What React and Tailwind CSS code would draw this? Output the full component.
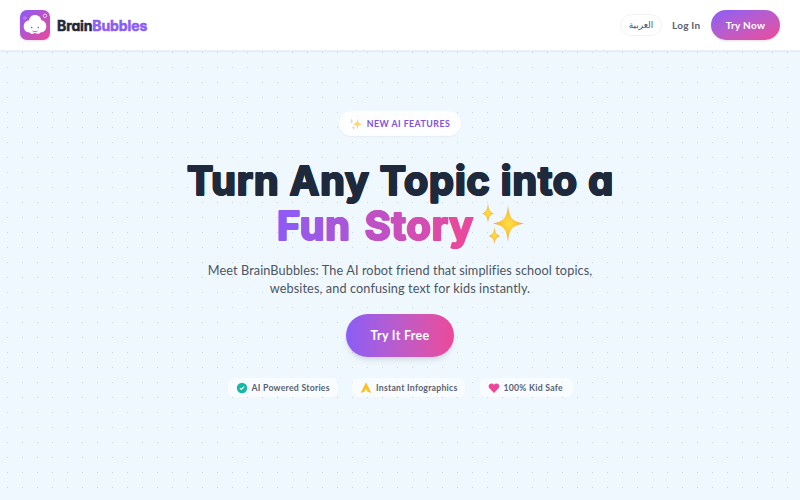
import React from 'react';

const Sparkles = ({ className }) => (
  <svg viewBox="0 0 42 42" className={className} aria-hidden="true">
    <defs>
      <radialGradient id="sparkle">
        <stop offset="0" stopColor="#fde047" />
        <stop offset="0.5" stopColor="#fbc638" />
        <stop offset="1" stopColor="#f2a06c" />
      </radialGradient>
    </defs>
    <path fill="url(#sparkle)" d="M26 3C27.300 16 30 19 42 21.500C30 24 27.300 27 26 40C24.700 27 22 24 11 21.500C22 19 24.700 16 26 3Z" />
    <path fill="url(#sparkle)" d="M6 1C6.900 8 8 10 12 11.500C8 13 6.900 15 6 21C5.100 15 4 13 0 11.500C4 10 5.100 8 6 1Z" />
    <path fill="url(#sparkle)" d="M12.500 25C13.300 31 14.500 32.500 18.500 34C14.500 35.500 13.300 37 12.500 42C11.700 37 10.500 35.500 6.500 34C10.500 32.500 11.700 31 12.500 25Z" />
  </svg>
);

const Logo = () => (
  <svg viewBox="0 0 30 30" className="h-[30px] w-[30px] shrink-0 rounded-[7px] shadow-sm" aria-hidden="true">
    <defs>
      <linearGradient id="logo" x1="0" y1="0" x2="1" y2="1">
        <stop stopColor="#8b5cf6" />
        <stop offset="1" stopColor="#ec4899" />
      </linearGradient>
    </defs>
    <rect width="30" height="30" fill="url(#logo)" />
    <path fill="#fff" d="M9 10.500C9.500 7 12 4.800 15.200 5C18.500 5 21 7.300 21.300 10.200C24.300 10.500 26.300 13 26.300 16C26.300 20 24 22.300 20.800 22.300C19.500 24 17 24.300 15 23C13 24.300 10.500 24 9.200 22.300C6 22.300 3.700 20 3.700 16.500C3.700 13 6 10.500 9 10.500Z" />
    <circle cx="11.700" cy="17.500" r="0.800" fill="#a04bc0" />
    <circle cx="18.300" cy="17.500" r="0.800" fill="#a04bc0" />
    <path d="M12.500 21Q13.700 22.600 15 21.400Q16.300 22.600 17.500 21" fill="none" stroke="#c04bb0" strokeWidth="0.900" />
    <circle cx="4.800" cy="8" r="1.200" fill="none" stroke="#c9a5f5" strokeWidth="0.700" />
    <circle cx="25" cy="5.800" r="1.700" fill="none" stroke="#f3d5f3" strokeWidth="0.900" />
  </svg>
);

const CheckIcon = () => (
  <svg viewBox="0 0 12 12" className="h-3 w-3" aria-hidden="true">
    <circle cx="6" cy="6" r="5.200" fill="#14b8a6" />
    <path d="M3.900 6.100L5.400 7.500L8.100 4.700" fill="none" stroke="#fff" strokeWidth="1.200" />
  </svg>
);

const BoltIcon = () => (
  <svg viewBox="0 0 12 12" className="h-3 w-3" aria-hidden="true">
    <path d="M6 1.600L10.300 10.200L7.300 8.700V6.500H4.700V8.700L1.700 10.200Z" fill="#fbbf24" stroke="#fbbf24" strokeWidth="1.200" strokeLinejoin="round" />
  </svg>
);

const HeartIcon = () => (
  <svg viewBox="0 0 12 12" className="h-3 w-3" aria-hidden="true">
    <path d="M6 11L1.600 6.500C-.6 3.800 1.300 1.400 3.500 1.400Q5.100 1.400 6 2.700Q6.900 1.400 8.500 1.400C10.700 1.400 12.600 3.800 10.400 6.500Z" fill="#ec4899" />
  </svg>
);

const features = [
  { label: 'AI Powered Stories', icon: CheckIcon, width: 'w-[110px]', text: 'w-[78px]' },
  { label: 'Instant Infographics', icon: BoltIcon, width: 'w-[113px]', text: 'w-[81px]' },
  { label: '100% Kid Safe', icon: HeartIcon, width: 'w-[93px]', text: 'w-[61px]' },
];

function App() {
  return (
    <div className="flex h-[500px] w-[800px] flex-col overflow-hidden bg-[#f0f8ff] bg-[radial-gradient(#cbd5e5_0.7px,transparent_1px)] bg-[size:15px_15px] font-['Lato','Noto_Sans',sans-serif] text-[#4b5563]">
      <header className="flex h-[51px] shrink-0 items-center justify-between border-b border-[#e8eef6] bg-white/95 px-5 shadow-xs">
        <div className="flex items-center gap-[7px]">
          <Logo />
          <div className="whitespace-nowrap font-['Inter',sans-serif] text-[14px] font-bold tracking-[-0.12px] text-[#1e293b] [-webkit-text-stroke:0.5px_currentColor] [font-feature-settings:'cv11']">
            Brain<span className="text-[#8b5cf6]">Bubbles</span>
          </div>
        </div>
        <nav className="flex items-center gap-[10px]">
          <button className="h-[22px] w-[42px] rounded-full border border-[#f1f3f7] bg-white font-['DejaVu_Sans',sans-serif] text-[9px] leading-none">العربية</button>
          <a className="w-[29px] whitespace-nowrap text-[10px] font-bold tracking-[0.25px] text-[#596270]" href="#login">Log In</a>
          <button className="h-[30px] w-[69px] rounded-full bg-linear-to-br from-[#8b5cf6] to-[#ec4899] text-[10px] font-bold tracking-[0.3px] text-white shadow-sm">Try Now</button>
        </nav>
      </header>

      <main className="flex flex-col items-center pt-[60px]">
        <div className="flex h-[25px] w-[122px] items-center justify-center gap-[5px] rounded-full bg-white/80 shadow-xs">
          <Sparkles className="h-3 w-3 opacity-80" />
          <span className="whitespace-nowrap text-[8.8px] font-bold tracking-[0.45px] text-[#8650d8]">NEW AI FEATURES</span>
        </div>

        <h1 className="mt-[23px] flex flex-col items-center whitespace-nowrap font-['Inter',sans-serif] text-[39.5px] leading-[45px] font-bold tracking-[0.9px] text-[#1e293b] [font-feature-settings:'cv11'] [-webkit-text-stroke:1.8px_currentColor] [text-shadow:1px_0_currentColor,0_1px_currentColor,-1px_0_currentColor,0_-1px_currentColor]">
          <span className="flex w-[426px] justify-between">
            <span>Turn</span><span>Any</span><span>Topic</span><span>into</span><span className="-mr-px">a</span>
          </span>
          <span className="flex w-[248px] items-start justify-between">
            <span className="flex w-[198px] justify-between pl-px">
              <span>
                <span className="text-[#905bf2]">F</span>
                <span className="text-[#9c59e6]">u</span>
                <span className="text-[#a957da]">n</span>
              </span>
              <span>
                <span className="text-[#c051c5]">S</span>
                <span className="text-[#ca4fbc]">t</span>
                <span className="text-[#d34db2]">o</span>
                <span className="text-[#dd4ba7]">r</span>
                <span className="text-[#e7499d]">y</span>
              </span>
            </span>
            <Sparkles className="-mt-[2px] h-[42px] w-[42px]" />
          </span>
        </h1>

        <p className="mt-[13px] text-center text-[12.7px] leading-[17.5px] tracking-[0.1px]">
          Meet BrainBubbles: The AI robot friend that simplifies school topics,<br />
          websites, and confusing text for kids instantly.
        </p>

        <button className="mt-[17px] h-[43px] w-[108px] rounded-full bg-linear-to-r from-[#8b5cf6] to-[#ec4899] pt-px text-[12.5px] font-bold tracking-[0.3px] text-white shadow-md">
          Try It Free
        </button>

        <div className="mt-[21px] flex gap-[14.5px]">
          {features.map(({ label, icon: Icon, width, text }) => (
            <div key={label} className={`flex h-[19px] items-center justify-center gap-1 rounded-md bg-white/50 ${width}`}>
              <Icon />
              <span className={`whitespace-nowrap text-[8.7px] font-bold tracking-[0.25px] text-[#596270] ${text}`}>{label}</span>
            </div>
          ))}
        </div>
      </main>
    </div>
  );
}

export default App;
